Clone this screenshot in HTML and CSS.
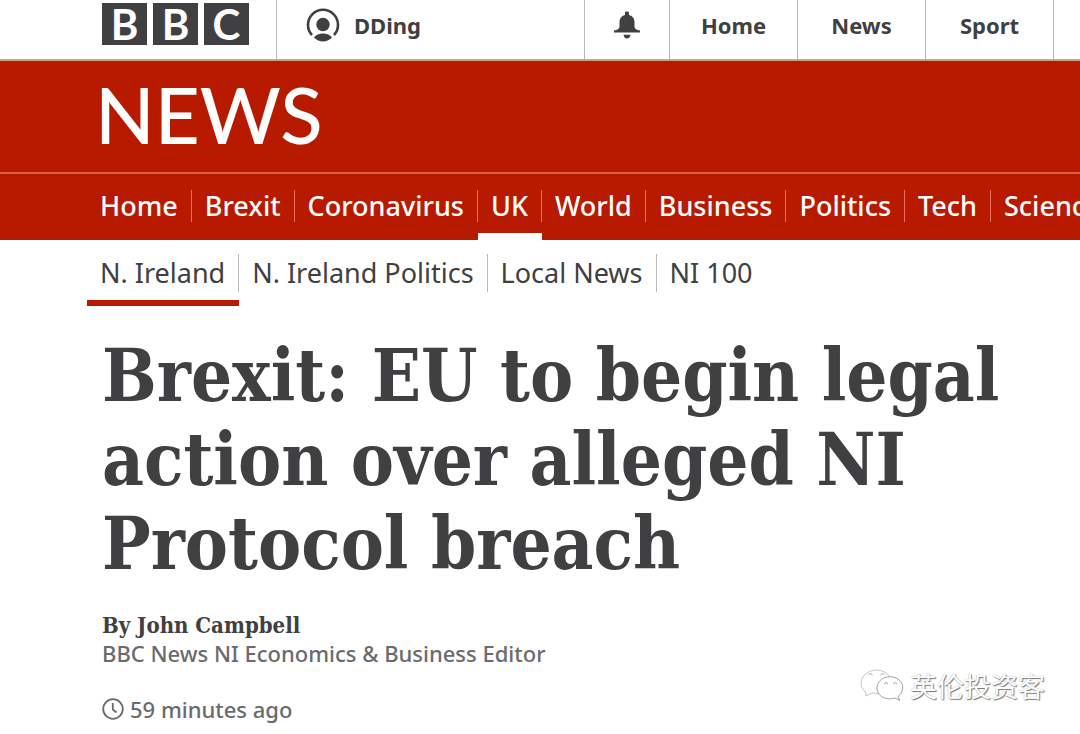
FILE: index.html
```html
<!DOCTYPE html>
<html lang="en">
<head>
<meta charset="utf-8">
<meta name="viewport" content="width=device-width, initial-scale=1">
<title>Brexit: EU to begin legal action over alleged NI Protocol breach</title>
<link rel="stylesheet" href="styles.css">
</head>
<body>
<header>
  <div class="topbar">
    <a class="logo" href="#" aria-label="BBC"><span class="block">B</span><span class="block">B</span><span class="block">C</span></a>
    <a class="account" href="#">
      <svg class="avatar" viewBox="0 0 34 34" aria-hidden="true">
        <path d="M6 27A15 15 0 1 1 28 27" fill="none" stroke="#404042" stroke-width="2.600"/>
        <circle cx="17" cy="16.500" r="6.700" fill="#404042"/>
        <path d="M8 29.500Q11 25.500 17 25.500Q23 25.500 26 29.500Q22 33.500 17 33.500Q12 33.500 8 29.500Z" fill="#404042"/>
      </svg>
      <span>DDing</span>
    </a>
    <button class="bell" type="button" aria-label="Notifications">
      <svg class="bell-icon" viewBox="0 0 26 28" aria-hidden="true">
        <path d="M11 1.500Q11 .5 13 .5T15 1.500V4C19 5 20.500 8 20.500 11.500V15.500C20.500 18 23 19 26 19.500V21.500H0V19.500C3 19 5.500 18 5.500 15.500V11.500C5.500 8 7 5 11 4Z" fill="#404042"/>
        <path d="M9.500 23.800H16.500Q16 27.500 13 27.500T9.500 23.800Z" fill="#404042"/>
      </svg>
    </button>
    <nav class="sites" aria-label="BBC">
      <a href="#">Home</a>
      <a href="#">News</a>
      <a href="#">Sport</a>
    </nav>
  </div>
  <div class="masthead"><a href="#">NEWS</a></div>
  <nav class="sections" aria-label="News">
    <a href="#"><span>Home</span></a>
    <a href="#"><span>Brexit</span></a>
    <a href="#"><span>Coronavirus</span></a>
    <a class="active" href="#"><span>UK</span></a>
    <a href="#"><span>World</span></a>
    <a href="#"><span>Business</span></a>
    <a href="#"><span>Politics</span></a>
    <a href="#"><span>Tech</span></a>
    <a href="#"><span>Science</span></a>
  </nav>
  <nav class="regions" aria-label="UK">
    <a class="active" href="#"><span>N. Ireland</span></a>
    <a href="#"><span>N. Ireland Politics</span></a>
    <a href="#"><span>Local News</span></a>
    <a href="#"><span>NI 100</span></a>
  </nav>
</header>
<main class="article">
  <h1>Brexit: EU to begin legal action over alleged NI Protocol breach</h1>
  <p class="author">By John Campbell</p>
  <p class="role">BBC News NI Economics &amp; Business Editor</p>
  <p class="time">
    <svg class="clock" viewBox="0 0 22 22" aria-hidden="true">
      <circle cx="11" cy="11" r="9.800" fill="none" stroke="#6b6b6e" stroke-width="1.800"/>
      <path d="M10.800 5V11.500L14.500 14.500" fill="none" stroke="#6b6b6e" stroke-width="1.800"/>
    </svg>
    <time>59 minutes ago</time>
  </p>
</main>
<div class="watermark">
  <svg class="wechat" viewBox="0 0 44 34" aria-hidden="true">
    <g fill="#fff" stroke="#a4a4a4" stroke-width="1">
      <path d="M5.500 23C-1 18 0 8 7 4C16-2 29 2 31 11C32 21 22 26 12 24L6 27Z" stroke="#c4c4c4"/>
      <path d="M38 27.500C45 22 44 13 37 9.500C29 5 18 9 17 18C16 27 26 32 35 29L40 31.500Z"/>
      <path d="M8.500 6Q10.500 3 12.500 6M20.500 6Q22.500 3 24.500 6M24 15Q26 12 28 15M33 15Q35 12 37 15"/>
    </g>
  </svg>
  <span lang="zh">英伦投资客</span>
</div>
</body>
</html>
```
FILE: styles.css
```css
* { box-sizing: border-box; }

body {
  margin: 0;
  background: #fff;
  color: #404042;
  font-family: "Noto Sans", "Open Sans", sans-serif;
  overflow-x: hidden;
}

a { color: inherit; text-decoration: none; }
h1, p { margin: 0; }

.topbar {
  display: flex;
  height: 59px;
  font-size: 22px;
  font-weight: 700;
  line-height: 50px;
}

.logo {
  display: flex;
  flex: none;
  gap: 6px;
  padding: 3px 27px 0 102px;
}

.block {
  width: 45px;
  height: 42px;
  background: #404042;
  color: #fff;
  font-family: Lato, sans-serif;
  font-size: 42px;
  font-weight: 700;
  line-height: 42px;
  text-align: center;
}

.account {
  display: flex;
  flex: 0 0 308px;
  gap: 14px;
  padding-left: 29px;
  border-left: 1px solid #b8b8b8;
}

.avatar { width: 34px; height: 34px; margin-top: 8px; }

.bell {
  flex: 0 0 85px;
  padding: 0 0 10px;
  border: 0;
  border-left: 1px solid #b8b8b8;
  background: none;
}

.bell-icon { display: block; width: 26px; height: 28px; margin: 0 auto; }

.sites { display: flex; flex: none; border-right: 1px solid #b8b8b8; }
.sites a {
  width: 128px;
  border-left: 1px solid #b8b8b8;
  text-align: center;
}

.masthead {
  padding: 8px 95px 12px;
  border-top: 2px solid #d79b90;
  border-bottom: 2px solid #dc5f4b;
  background: #b81a00;
  color: #fff;
  font-family: Lato, sans-serif;
  font-size: 78px;
  font-weight: 500;
  line-height: 91px;
}

.sections, .regions {
  display: flex;
  padding-left: 87px;
  overflow: hidden;
  font-size: 27px;
  white-space: nowrap;
}

.sections { background: #b81a00; color: #fff; font-weight: 500; }

.sections a { padding: 16px 0 11px; border-bottom: 7px solid transparent; }
.sections span { display: block; padding: 0 13px; border-right: 1px solid #e9705a; line-height: 32px; }
.sections .active { border-bottom-color: #fff; }

.regions a { padding: 14px 0 8px; border-bottom: 6px solid transparent; }
.regions span { display: block; padding: 0 13px; border-right: 1px solid #b8b8b8; line-height: 38px; }
.regions a:last-child span { border-right: 0; }
.regions .active { border-bottom-color: #b81a00; }

.article { padding: 28px 80px 12px 102px; }

h1 {
  font-family: "DejaVu Serif Condensed", "DejaVu Serif", serif;
  font-size: 72px;
  font-weight: 700;
  line-height: 84px;
}

.author {
  margin-top: 25px;
  font-family: "DejaVu Serif Condensed", "DejaVu Serif", serif;
  font-size: 22px;
  font-weight: 700;
  line-height: 28px;
}

.role, .time { color: #6b6b6e; font-size: 22px; font-weight: 500; line-height: 28px; }

.time { display: flex; align-items: center; gap: 6px; margin-top: 28px; }
.clock { width: 22px; height: 22px; }

.watermark {
  position: absolute;
  right: 35px;
  bottom: 30px;
  display: flex;
  align-items: center;
  gap: 6px;
  color: #fff;
  font-family: "Noto Sans CJK SC", sans-serif;
  font-size: 27px;
  line-height: 36px;
  text-shadow: 1px 1px 1px #777, 0 0 1px #999;
}

.wechat { width: 44px; height: 34px; }
```
